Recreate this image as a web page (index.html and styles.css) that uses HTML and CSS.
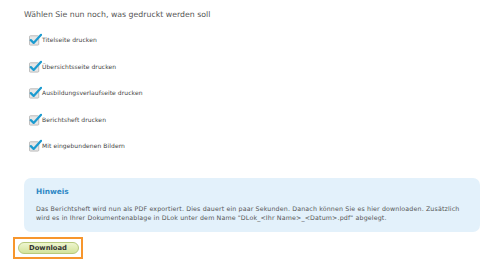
FILE: index.html
```html
<!DOCTYPE html>
<html>
<head>
<meta charset="utf-8">
<link rel="stylesheet" href="styles.css">
</head>
<body>
<div class="page">
  <h1 class="title">Wählen Sie nun noch, was gedruckt werden soll</h1>
  <ul class="options">
    <li class="opt"><span class="cb"><svg width="14" height="13" viewBox="0 0 14 13"><rect x="0.5" y="2.5" width="10" height="10" rx="1" fill="#e6e6e6" stroke="#b9b9b9"/><path d="M2 7.2 L5 10.2 L13 1.5" fill="none" stroke="#1c9bd0" stroke-width="2.4" stroke-linecap="round" stroke-linejoin="round"/></svg></span>Titelseite drucken</li>
    <li class="opt"><span class="cb"><svg width="14" height="13" viewBox="0 0 14 13"><rect x="0.5" y="2.5" width="10" height="10" rx="1" fill="#e6e6e6" stroke="#b9b9b9"/><path d="M2 7.2 L5 10.2 L13 1.5" fill="none" stroke="#1c9bd0" stroke-width="2.4" stroke-linecap="round" stroke-linejoin="round"/></svg></span>Übersichtsseite drucken</li>
    <li class="opt"><span class="cb"><svg width="14" height="13" viewBox="0 0 14 13"><rect x="0.5" y="2.5" width="10" height="10" rx="1" fill="#e6e6e6" stroke="#b9b9b9"/><path d="M2 7.2 L5 10.2 L13 1.5" fill="none" stroke="#1c9bd0" stroke-width="2.4" stroke-linecap="round" stroke-linejoin="round"/></svg></span>Ausbildungsverlaufseite drucken</li>
    <li class="opt"><span class="cb"><svg width="14" height="13" viewBox="0 0 14 13"><rect x="0.5" y="2.5" width="10" height="10" rx="1" fill="#e6e6e6" stroke="#b9b9b9"/><path d="M2 7.2 L5 10.2 L13 1.5" fill="none" stroke="#1c9bd0" stroke-width="2.4" stroke-linecap="round" stroke-linejoin="round"/></svg></span>Berichtsheft drucken</li>
    <li class="opt"><span class="cb"><svg width="14" height="13" viewBox="0 0 14 13"><rect x="0.5" y="2.5" width="10" height="10" rx="1" fill="#e6e6e6" stroke="#b9b9b9"/><path d="M2 7.2 L5 10.2 L13 1.5" fill="none" stroke="#1c9bd0" stroke-width="2.4" stroke-linecap="round" stroke-linejoin="round"/></svg></span>Mit eingebundenen Bildern</li>
  </ul>
  <div class="note">
    <div class="note-title">Hinweis</div>
    <p class="note-text">Das Berichtsheft wird nun als PDF exportiert. Dies dauert ein paar Sekunden. Danach können Sie es hier downloaden. Zusätzlich wird es in Ihrer Dokumentenablage in DLok unter dem Name "DLok_&lt;Ihr Name&gt;_&lt;Datum&gt;.pdf" abgelegt.</p>
  </div>
  <div class="focus"><button class="btn">Download</button></div>
</div>
</body>
</html>
```

FILE: styles.css
```css
* { box-sizing: border-box; }
html, body { margin: 0; padding: 0; background: #fff; }
body { font-family: "DejaVu Sans", Verdana, sans-serif; color: #555; }
.page { width: 500px; height: 270px; padding: 10px 20px 0 13px; display: flex; flex-direction: column; }
.title { margin: 0 0 0 11px; font-size: 7.8px; font-weight: normal; color: #555; line-height: 10px; }
.options { list-style: none; margin: 13px 0 0 16px; padding: 0; display: flex; flex-direction: column; gap: 13.5px; }
.opt { display: flex; align-items: center; height: 13px; font-size: 6px; letter-spacing: 0.08px; color: #444; }
.cb { display: flex; width: 13px; height: 13px; margin-right: 0; }
.cb svg { display: block; }
.note { margin: 26px 0 0 11px; width: 456px; background: #e3f1fb; border-radius: 7px; padding: 9px 10px 10px 12px; }
.note-title { font-size: 7.4px; font-weight: bold; color: #2f88c5; line-height: 10px; }
.note-text { margin: 6.5px 0 0 0; font-size: 6.3px; letter-spacing: 0.14px; line-height: 9px; color: #555; }
.focus { margin-top: 5px; width: 70px; height: 22px; border: 2px solid #f7962d; display: flex; align-items: center; justify-content: center; }
.btn { width: 61px; height: 12px; padding: 0; border: 1px solid #b7c97c; border-radius: 7px; background: linear-gradient(#eef5cf, #d3e39b); font-family: "DejaVu Sans", Verdana, sans-serif; font-size: 6.8px; font-weight: bold; color: #333; line-height: 10px; }
```
